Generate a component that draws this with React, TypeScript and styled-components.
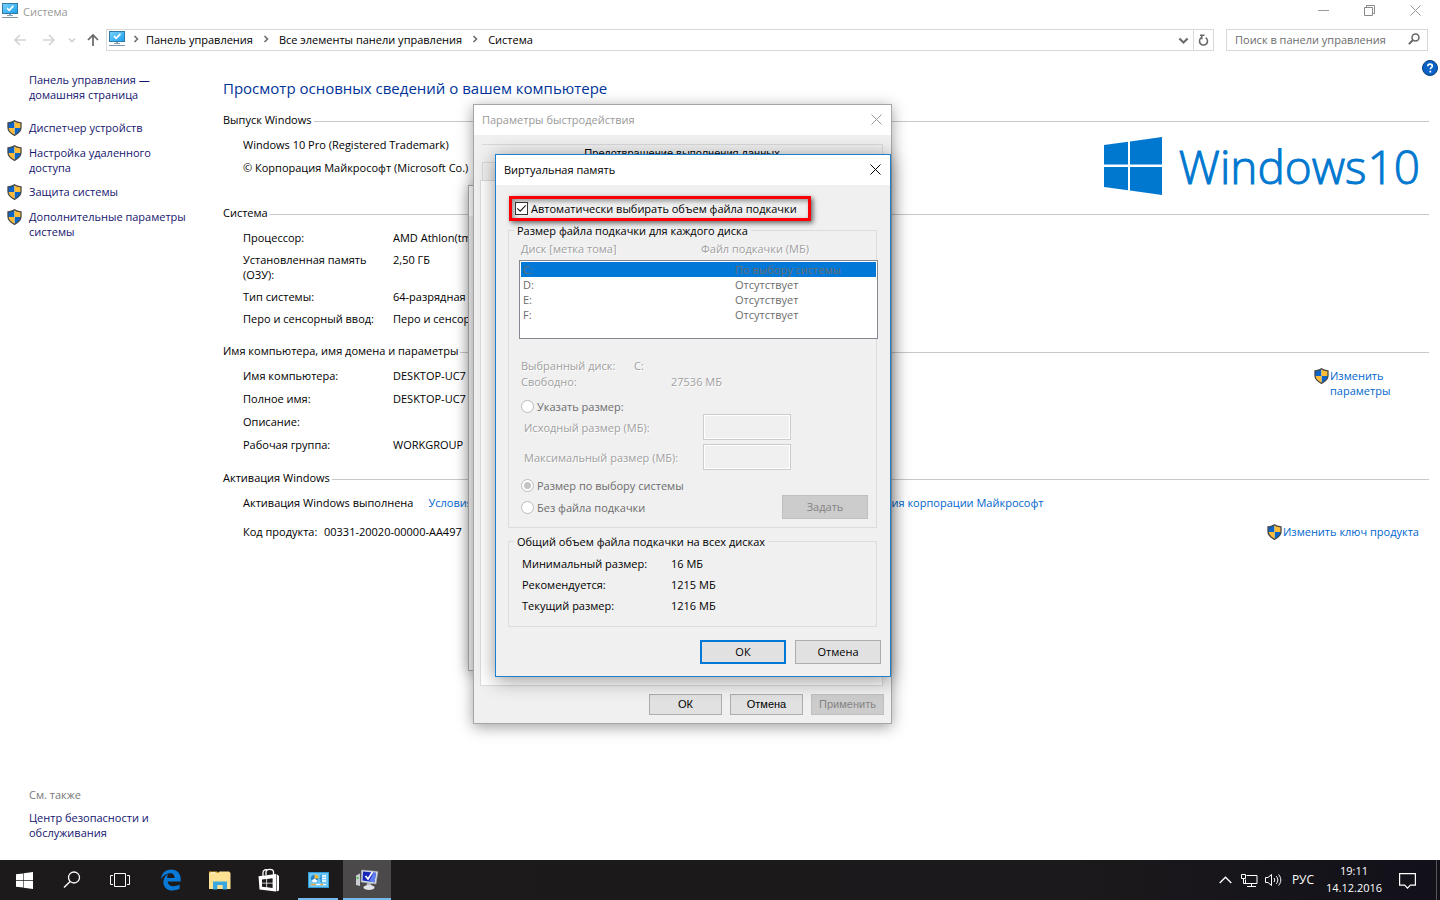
import React from 'react';
import styled, { createGlobalStyle, css } from 'styled-components';

const Global = createGlobalStyle`
  *, *::before, *::after { box-sizing: border-box; }
  body {
    margin: 0;
    background: #fff;
    color: #000;
    font: 11px/15px 'Open Sans', 'Noto Sans', sans-serif;
  }
  button, input { font: inherit; color: inherit; }
  button { padding: 0; border: 0; background: none; }
  a { color: inherit; text-decoration: none; }
  svg { display: block; flex: none; }
  h1, h2, p, ul, dl, dd, dt { margin: 0; padding: 0; font-weight: 400; }
`;

/* ---------- Desktop and main window ---------- */

const Desktop = styled.div`
  position: relative;
  display: flex;
  flex-direction: column;
  min-height: 100vh;
  overflow: hidden;
`;

const MainWindow = styled.main`
  flex: 1;
  display: flex;
  flex-direction: column;
`;

const TitleBar = styled.header`
  display: flex;
  align-items: center;
  height: 24px;
  padding: 0 2px 2px;
  gap: 5px;
  color: #999;
`;

const WindowTitle = styled.span`
  flex: 1;
`;

const CaptionButtons = styled.div`
  display: flex;
  align-self: flex-start;
`;

const CaptionButton = styled.button`
  display: grid;
  place-items: center;
  width: 46px;
  height: 21px;
`;

const NavBar = styled.nav`
  display: flex;
  align-items: stretch;
  height: 22px;
  margin-top: 5px;
  padding: 0 12px 0 6px;
`;

const NavButton = styled.button<{ $w: number }>`
  display: grid;
  place-items: center;
  width: ${(p) => p.$w}px;
`;

const AddressBar = styled.div`
  flex: 1;
  display: flex;
  align-items: center;
  margin-right: 12px;
  padding-left: 2px;
  border: 1px solid #d9d9d9;
`;

const Crumbs = styled.div`
  flex: 1;
  display: flex;
  align-items: center;
  padding-bottom: 2px;
`;

const CrumbArrow = styled.span<{ $first?: boolean }>`
  display: grid;
  place-items: center;
  width: ${(p) => (p.$first ? 21 : 26)}px;
`;

const AddressButton = styled.button<{ $divided?: boolean }>`
  display: grid;
  place-items: center;
  align-self: stretch;
  width: 20px;
  border-left: ${(p) => (p.$divided ? '1px solid #d9d9d9' : '0')};
`;

const SearchBox = styled.label`
  display: flex;
  align-items: center;
  width: 202px;
  padding: 0 7px 2px 8px;
  border: 1px solid #d9d9d9;
`;

const SearchInput = styled.input`
  flex: 1;
  min-width: 0;
  padding: 0;
  border: 0;
  outline: 0;
  background: none;
  &::placeholder { color: #6d6d6d; opacity: 1; }
`;

const Columns = styled.div`
  flex: 1;
  display: grid;
  grid-template-columns: 223px minmax(0, 1fr);
  padding-right: 11px;
`;

const Sidebar = styled.aside`
  display: flex;
  flex-direction: column;
  padding: 21px 0 20px;
`;

const SideLink = styled.a<{ $after?: number }>`
  display: flex;
  width: 192px;
  margin-bottom: ${(p) => p.$after ?? 9}px;
  padding-left: 7px;
  color: #15156e;
`;

const SideIcon = styled.span`
  flex: none;
  width: 22px;
`;

const SeeAlso = styled.p`
  margin-top: auto;
  padding: 0 0 8px 29px;
  color: #777;
`;

const Content = styled.section`
  position: relative;
  padding-top: 27px;
`;

const HelpButton = styled.button`
  position: absolute;
  top: 9px;
  right: -9px;
`;

const PageTitle = styled.h1`
  margin-bottom: 14px;
  color: #003399;
  font-size: 15px;
  line-height: 20px;
`;

const SectionBox = styled.section<{ $after?: number }>`
  margin-bottom: ${(p) => p.$after ?? 17}px;
`;

const SectionHeading = styled.h2`
  display: flex;
  align-items: center;
  gap: 2px;
  margin-bottom: 10px;
  font-size: 11px;
  line-height: 15px;
  white-space: nowrap;
  &::after {
    content: '';
    flex: 1;
    height: 1px;
    margin-top: 3px;
    background: #c8c8c8;
  }
`;

const SectionBody = styled.div`
  display: flex;
  justify-content: space-between;
  align-items: flex-start;
  padding-left: 20px;
`;

const Lines = styled.div`
  display: flex;
  flex-direction: column;
  gap: 8px;
`;

const Facts = styled.dl<{ $gap: number; $label: number }>`
  display: grid;
  grid-template-columns: ${(p) => p.$label}px max-content;
  row-gap: ${(p) => p.$gap}px;
  dt { padding-right: 2px; }
`;

const Brand = styled.div`
  display: flex;
  align-items: center;
  gap: 17px;
  height: 58px;
  padding-right: 9px;
  color: #0078d0;
`;

const BrandName = styled.span`
  display: flex;
  gap: 1px;
  font-size: 46px;
  font-weight: 300;
  line-height: 58px;
  -webkit-text-stroke: 1px currentColor;
`;

const ShieldLink = styled.a<{ $w?: number }>`
  display: flex;
  gap: 1px;
  width: ${(p) => (p.$w ? `${p.$w}px` : 'auto')};
  color: #0066cc;
`;

const ActivationRow = styled.div`
  display: flex;
  gap: 15px;
  margin-bottom: 14px;
  padding-left: 20px;
`;

const LicenseLink = styled.a`
  display: flex;
  justify-content: space-between;
  width: 615px;
  color: #0066cc;
  white-space: nowrap;
`;

const ProductRow = styled.div`
  display: flex;
  justify-content: space-between;
  padding: 0 10px 0 20px;
`;

/* ---------- Dialogs ---------- */

const dialogFrame = css`
  position: absolute;
  display: flex;
  flex-direction: column;
  background: #f0f0f0;
`;

const PropertiesDialog = styled.div`
  ${dialogFrame}
  left: 468px;
  top: 185px;
  width: 410px;
  height: 486px;
  border: 1px solid #a6a6a6;
  box-shadow: 0 2px 14px rgba(0, 0, 0, 0.35);
`;

const PerformanceDialog = styled.div`
  ${dialogFrame}
  left: 473px;
  top: 104px;
  width: 419px;
  height: 620px;
  border: 1px solid #a6a6a6;
  box-shadow: 0 3px 14px rgba(0, 0, 0, 0.38);
`;

const MemoryDialog = styled.form`
  ${dialogFrame}
  left: 495px;
  top: 154px;
  width: 396px;
  border: 1px solid #1a80d2;
  box-shadow: 0 3px 18px rgba(0, 0, 0, 0.42);
`;

const DialogTitle = styled.header<{ $inactive?: boolean }>`
  display: flex;
  flex: none;
  align-items: center;
  justify-content: space-between;
  height: 30px;
  padding: 0 9px 2px 8px;
  background: #fff;
  color: ${(p) => (p.$inactive ? '#999' : '#000')};
`;

const TabStack = styled.div`
  display: flex;
  flex-direction: column;
  margin: 9px 8px 0;
`;

const Tab = styled.button<{ $back?: boolean }>`
  height: 18px;
  border: 1px solid #d9d9d9;
  border-bottom: 0;
  border-left-width: ${(p) => (p.$back ? 0 : 1)}px;
  background: #f0f0f0;
  font-family: 'Liberation Sans', sans-serif;
  line-height: 17px;
`;

const TabPanel = styled.div`
  flex: 1;
  margin: 0 8px 8px 6px;
  border: 1px solid #dcdcdc;
  background: #fff;
`;

const ButtonRow = styled.div<{ $gap: number }>`
  display: flex;
  justify-content: flex-end;
  gap: ${(p) => p.$gap}px;
`;

const PushButton = styled.button<{ $small?: boolean; $primary?: boolean }>`
  width: ${(p) => (p.$small ? 73 : 86)}px;
  height: ${(p) => (p.$small ? 21 : 24)}px;
  padding-bottom: ${(p) => (p.$small ? 0 : 2)}px;
  border: ${(p) => (p.$primary ? '2px solid #0078d7' : '1px solid #adadad')};
  background: #e1e1e1;
  font-family: ${(p) => (p.$small ? "'Liberation Sans', sans-serif" : 'inherit')};
  line-height: 15px;
  &:disabled {
    border-color: #bfbfbf;
    background: #ccc;
    color: #838383;
  }
`;

const PerformanceButtons = styled.div`
  padding: 0 7px 8px;
`;

const MemoryBody = styled.div`
  display: flex;
  flex-direction: column;
  padding: 11px 9px 12px 12px;
`;

const Highlight = styled.label`
  display: flex;
  align-items: center;
  gap: 3px;
  align-self: flex-start;
  width: 302px;
  height: 25px;
  margin: 0 0 2px 1px;
  padding-left: 3px;
  border: 3px solid #fb0007;
  box-shadow: 2px 2px 5px rgba(0, 0, 0, 0.6), inset 2px 2px 5px rgba(0, 0, 0, 0.4);
`;

const CheckBox = styled.input`
  appearance: none;
  width: 13px;
  height: 13px;
  margin: 0;
  border: 1px solid #333;
  background: #fff;
  &:checked {
    background: #fff
      url("data:image/svg+xml,%3Csvg xmlns='http://www.w3.org/2000/svg' viewBox='0 0 11 11'%3E%3Cpath d='M1.3 5.3 4.2 8.2 9.7 2.3' fill='none' stroke='%23222' stroke-width='1.2'/%3E%3C/svg%3E");
  }
`;

const Group = styled.fieldset<{ $bottom: number }>`
  min-width: 0;
  margin: 0 4px 6px 0;
  padding: 0 0 ${(p) => p.$bottom}px 5px;
  border: 1px solid #dcdcdc;
`;

const Legend = styled.legend`
  padding: 0 3px;
`;

const ListHead = styled.div`
  display: grid;
  grid-template-columns: 180px 1fr;
  padding: 3px 0 4px 7px;
`;

const Dim = styled.span`
  color: #a0a0a0;
  text-shadow: 1px 1px 0 #fff;
`;

const DriveFrame = styled.div`
  height: 79px;
  margin: 0 -2px 19px 5px;
  padding: 1px;
  border: 1px solid #828790;
  background: #fff;
`;

const DriveTable = styled.table`
  width: 100%;
  border-spacing: 0;
  color: #6d6d6d;
  td { height: 15px; padding: 0 2px; }
  td:first-child { width: 212px; }
`;

const DriveRow = styled.tr<{ $selected?: boolean }>`
  background: ${(p) => (p.$selected ? '#0078d7' : 'transparent')};
`;

const DiskInfo = styled.div`
  display: grid;
  grid-template-columns: 113px 37px 1fr;
  row-gap: 1px;
  margin-bottom: 10px;
  padding-left: 7px;
`;

const FreeSpace = styled(Dim)`
  grid-column: 3;
`;

const RadioLabel = styled.label`
  display: flex;
  align-items: center;
  gap: 3px;
  height: 15px;
  padding-left: 7px;
  color: #6d6d6d;
`;

const Radio = styled.input`
  appearance: none;
  display: grid;
  place-items: center;
  width: 13px;
  height: 13px;
  margin: 0;
  border: 1px solid #bcbcbc;
  border-radius: 50%;
  background: #fff;
  &:checked::before {
    content: '';
    width: 7px;
    height: 7px;
    border-radius: 50%;
    background: #c4c4c4;
  }
`;

const SizeRow = styled.label`
  display: grid;
  grid-template-columns: 179px 88px;
  align-items: center;
  margin-bottom: 4px;
  padding-left: 10px;
`;

const SizeInput = styled.input`
  width: 88px;
  height: 26px;
  border: 1px solid #ccc;
  background: #f0f0f0;
  box-shadow: inset 0 0 0 1px #fff;
`;

const ModeRow = styled.div`
  display: flex;
  align-items: flex-end;
  justify-content: space-between;
  margin-top: 8px;
  padding-right: 8px;
`;

const ModeChoices = styled.div`
  display: flex;
  flex-direction: column;
  gap: 7px;
  padding-bottom: 4px;
`;

const Totals = styled.dl`
  display: grid;
  grid-template-columns: 149px 1fr;
  row-gap: 6px;
  padding: 7px 0 0 8px;
`;

const MemoryButtons = styled(ButtonRow)`
  margin-top: 7px;
`;

/* ---------- Taskbar ---------- */

const Taskbar = styled.footer`
  display: flex;
  justify-content: space-between;
  height: 40px;
  background: linear-gradient(90deg, #1d1a1b 0%, #1b191b 75%, #12111a 100%);
  color: #fff;
`;

const TaskGroup = styled.div<{ $gap?: number }>`
  display: flex;
  gap: ${(p) => p.$gap ?? 0}px;
`;

const TaskButton = styled.button<{ $state?: 'open' | 'active' }>`
  display: grid;
  place-items: center;
  position: relative;
  width: 48px;
  height: 40px;
  background: ${(p) => (p.$state === 'active' ? '#4b494a' : 'none')};
  &::after {
    content: '';
    position: absolute;
    bottom: 0;
    left: ${(p) => (p.$state === 'open' ? 4 : 0)}px;
    right: ${(p) => (p.$state === 'open' ? 4 : 0)}px;
    height: ${(p) => (p.$state ? 2 : 0)}px;
    background: #76b9ed;
  }
`;

const TrayButton = styled.button<{ $w: number }>`
  display: grid;
  place-items: center;
  width: ${(p) => p.$w}px;
  height: 40px;
  color: #fff;
`;

const Language = styled(TrayButton)`
  padding: 0 0 2px 3px;
  font-size: 12px;
`;

const Clock = styled.time`
  width: 72px;
  padding-top: 2px;
  text-align: center;
  line-height: 17px;
  white-space: pre-line;
`;

const ShowDesktop = styled.button`
  width: 4px;
  height: 40px;
  margin-left: 12px;
  border-left: 1px solid #56555a;
`;

/* ---------- Icons ---------- */

const MonitorIcon = () => (
  <svg width="16" height="16" viewBox="0 0 16 16">
    <defs>
      <linearGradient id="screen" x1="0" y1="0" x2="1" y2="1">
        <stop offset="0" stopColor="#7bd3fb" />
        <stop offset="1" stopColor="#189ff0" />
      </linearGradient>
    </defs>
    <rect x=".5" y=".5" width="15" height="10" fill="url(#screen)" stroke="#2f7ba6" />
    <path d="M5 5.2 7.2 7.4 11.4 2.9" fill="none" stroke="#fff" strokeWidth="1.7" />
    <path d="M7 11h2v1h2v1H5v-1h2z" fill="#8aa0b0" />
    <path d="M0 14h16v1H0z" fill="#7d96a8" />
  </svg>
);

const ShieldIcon = () => (
  <svg width="15" height="16" viewBox="0 0 15 16">
    <clipPath id="shield"><path d="M7.5 1 14 3v4.5c0 3.5-3 6-6.500 7.700C4 13.500 1 11 1 7.500V3z" /></clipPath>
    <g clipPath="url(#shield)">
      <path d="M0 0h7.500v8H0zM7.500 8H15v8H7.500z" fill="#0b64c8" />
      <path d="M7.500 0H15v8H7.500zM0 8h7.500v8H0z" fill="#fdbc35" />
    </g>
    <path d="M7.500.7C6 2 3.500 2.700 1 2.900v4.600c0 3.500 3 6.100 6.500 7.800 3.500-1.700 6.500-4.300 6.500-7.800V2.900C11.500 2.700 9 2 7.500.7z" fill="none" stroke="#474747" strokeWidth="1.300" />
  </svg>
);

const CloseIcon = () => (
  <svg width="11" height="11" viewBox="0 0 11 11">
    <path d="M.5.5l10 10M10.500.5l-10 10" stroke="currentColor" fill="none" />
  </svg>
);

const ArrowIcon = ({ turn, color }: { turn: number; color: string }) => (
  <svg width="14" height="14" viewBox="0 0 14 14">
    <path d="M7 13V2M2 7l5-5 5 5" fill="none" stroke={color} strokeWidth="1.700" transform={`rotate(${turn} 7 7)`} />
  </svg>
);

const Chevron = ({ turn, color = '#6e6e6e', size = 8 }: { turn: number; color?: string; size?: number }) => (
  <svg width={size} height={size} viewBox="0 0 8 8">
    <path d="M1 2.500l3 3 3-3" fill="none" stroke={color} strokeWidth="1.600" transform={`rotate(${turn} 4 4)`} />
  </svg>
);

const RefreshIcon = () => (
  <svg width="11" height="12" viewBox="0 0 11 12">
    <path d="M7.700 3.700A4 4 0 1 1 3.300 3.700" fill="none" stroke="#666" strokeWidth="1.500" />
    <path d="M2 1.200h4.500M3.800 1v4.200" fill="none" stroke="#666" strokeWidth="1.500" />
  </svg>
);

const SearchIcon = () => (
  <svg width="12" height="12" viewBox="0 0 12 12">
    <circle cx="7.500" cy="4.500" r="3.500" fill="none" stroke="#666" strokeWidth="1.500" />
    <path d="M5 7 .8 11.200" stroke="#666" strokeWidth="1.900" />
  </svg>
);

const HelpIcon = () => (
  <svg width="16" height="16" viewBox="0 0 16 16">
    <circle cx="8" cy="8" r="7.500" fill="#0a62c6" stroke="#0c3e7a" />
    <path d="M5.800 6.200C5.800 3.300 10.300 3.500 10.300 6c0 1.600-2 1.700-2 3.300" fill="none" stroke="#fff" strokeWidth="1.700" />
    <path d="M7.400 10.700h1.800v1.800H7.400z" fill="#fff" />
  </svg>
);

const WindowsFlag = ({ size }: { size: number }) => (
  <svg width={size} height={size} viewBox="0 0 58 58">
    <path d="M0 8.100 24 4.700V27.500H0zM26 4.400 58 0v27.500H26zM0 30h24v23.300L0 49.900zM26 30h32v28l-32-4.400z" fill="currentColor" />
  </svg>
);

const TaskSearchIcon = () => (
  <svg width="18" height="18" viewBox="0 0 18 18">
    <circle cx="11" cy="6.500" r="5.500" fill="none" stroke="#fff" strokeWidth="1.300" />
    <path d="M7.100 10.400 1 16.500" stroke="#fff" strokeWidth="1.400" />
  </svg>
);

const TaskViewIcon = () => (
  <svg width="20" height="16" viewBox="0 0 20 16" fill="none" stroke="#fff">
    <path d="M4.500 1.500h11v13h-11zM3 3.500H.5v9H3M17 3.500h2.500v9H17" />
  </svg>
);

const EdgeIcon = () => (
  <svg width="20" height="22" viewBox="0 0 20 22">
    <path
      d="M0 10.200C.6 4.300 4.600.6 10.200.6c6 0 9.500 4.200 9.500 9.700v2.200H6.700c.2 3.200 2.600 4.700 5.700 4.700 2.200 0 4.300-.6 6.200-1.700v4.300c-2.200 1.200-4.600 1.700-7.200 1.700-5.400 0-9-3.200-9-8.300 0-3.800 2-6.900 5.300-8.400-1 1.200-1.500 2.700-1.600 4.100h7.500c0-2.900-1.500-4.600-4.300-4.600-3.800 0-7.300 2.400-9.300 5.900z"
      fill="#0a7ad8"
    />
  </svg>
);

const FolderIcon = () => (
  <svg width="22" height="19" viewBox="0 0 22 19">
    <path d="M0 .5h8l2 2H0z" fill="#e9b02e" />
    <path d="M0 2h9l1.500-1.500H20L21.500 2v16H0z" fill="#fde293" />
    <path d="M1.500 1.200h5v1h-5z" fill="#fff" />
    <path d="M4 18.500v-8h14v8h-4.300V14H8.300v4.500z" fill="#39a8e0" />
  </svg>
);

const StoreIcon = () => (
  <svg width="22" height="24" viewBox="0 0 22 24">
    <path d="M5 8V4.500C5 2 8 0.800 10 2.200M8 7V4c0-3.600 7.500-3.600 7.500 0v4" fill="none" stroke="#fff" strokeWidth="1.300" />
    <path d="M.5 8.200 18 6v17.500L1.500 21.500zM18.600 6l2.400 2v14.500l-2.400 1z" fill="#fff" />
    <path d="M4 11.500l4.300-.5v3.700H4zM9.100 10.900l5.500-.6v4.400H9.100zM4 15.500h4.300v3.700L4 18.800zM9.100 15.500h5.500v4.400l-5.500-.6z" fill="#1c1a1b" />
  </svg>
);

const ControlPanelIcon = () => (
  <svg width="21" height="16" viewBox="0 0 21 16">
    <rect x=".5" y=".5" width="20" height="15" fill="#6cc6f5" stroke="#2e9bd6" />
    <circle cx="6.500" cy="6.500" r="3.500" fill="#1b7fc9" />
    <path d="M6.500 6.500 9.500 8.800A3.700 3.700 0 0 1 3.500 8.800z" fill="#fff" />
    <path d="M6.500 6.500V2.500a4 4 0 0 1 4 4z" fill="#fdb92c" />
    <path d="M14 4h4M14 6.500h4M14 9h4" stroke="#fff" strokeWidth="1.400" />
    <path d="M14 3H13v7h1M11.500 6.500H13" stroke="#1b7fc9" fill="none" />
    <path d="M3 12.500h15" stroke="#fff" strokeWidth="1.200" />
    <path d="M3 12.500h5M12.500 12.500H15" stroke="#f0a030" strokeWidth="1.300" />
  </svg>
);

const SystemIcon = () => (
  <svg width="24" height="22" viewBox="0 0 24 22">
    <path d="M1 6.500 5 4.500V17l-4-1z" fill="#c9ccd2" />
    <path d="M1.500 8h2v2h-2z" fill="#4fc04a" />
    <path d="M6.500 1 23 2.500 21 15 6 13z" fill="#d8dce4" stroke="#9aa0ab" strokeWidth=".6" />
    <path d="M8 2.600 21 3.800 19.500 13.200 7.500 11.600z" fill="#1627b8" />
    <path d="M14 12.800l4.500-9 2.500.2-1.500 9.200z" fill="#5f7df0" />
    <path d="M10.500 7l2.500 3L17.500 3" fill="none" stroke="#fff" strokeWidth="1.700" />
    <path d="M12 14h4l.5 3h-5z" fill="#b4b8c0" />
    <ellipse cx="14" cy="18.500" rx="5.500" ry="2.500" fill="#e1e3e8" />
  </svg>
);

const NetworkIcon = () => (
  <svg width="17" height="15" viewBox="0 0 17 15" fill="none" stroke="#fff">
    <path d="M5.500 2.500h10.500v8H4.500V6.500M10.500 10.500v3M6 13.500h9M.5 1.500h4v4h-4zM2.500 5.500v5H5" />
  </svg>
);

const SoundIcon = () => (
  <svg width="17" height="14" viewBox="0 0 17 14" fill="none" stroke="#fff">
    <path d="M.5 4.500h2.500l3.500-3v11L3 9.500H.5zM9 5c.9 1.300.9 2.700 0 4M11.300 3.200c2 2.400 2 5.200 0 7.600M13.600 1.500c2.900 3.500 2.900 7.500 0 11" />
  </svg>
);

const ActionCenterIcon = () => (
  <svg width="17" height="17" viewBox="0 0 17 17" fill="none" stroke="#fff" strokeWidth="1.200">
    <path d="M.6 1.600h15.800v11.500h-5l-2.900 3-2.900-3h-5z" />
  </svg>
);

/* ---------- Data ---------- */

const sideTasks = [
  'Диспетчер устройств',
  'Настройка удаленного доступа',
  'Защита системы',
  'Дополнительные параметры системы',
];

const systemFacts = [
  ['Процессор:', 'AMD Athlon(tm)'],
  ['Установленная память (ОЗУ):', '2,50 ГБ'],
  ['Тип системы:', '64-разрядная ОС'],
  ['Перо и сенсорный ввод:', 'Перо и сенсорный ввод'],
];

const nameFacts = [
  ['Имя компьютера:', 'DESKTOP-UC7'],
  ['Полное имя:', 'DESKTOP-UC7'],
  ['Описание:', ''],
  ['Рабочая группа:', 'WORKGROUP'],
];

const drives = [
  ['C:', 'По выбору системы'],
  ['D:', 'Отсутствует'],
  ['E:', 'Отсутствует'],
  ['F:', 'Отсутствует'],
];

const totals = [
  ['Минимальный размер:', '16 МБ'],
  ['Рекомендуется:', '1215 МБ'],
  ['Текущий размер:', '1216 МБ'],
];

const FactRows = ({ rows }: { rows: string[][] }) => (
  <>
    {rows.map(([label, value]) => (
      <React.Fragment key={label}>
        <dt>{label}</dt>
        <dd>{value}</dd>
      </React.Fragment>
    ))}
  </>
);

const SystemWindow = () => (
  <MainWindow>
    <TitleBar>
      <MonitorIcon />
      <WindowTitle>Система</WindowTitle>
      <CaptionButtons>
        <CaptionButton aria-label="Свернуть">
          <svg width="11" height="11"><path d="M0 5.500h11" stroke="#999" /></svg>
        </CaptionButton>
        <CaptionButton aria-label="Свернуть в окно">
          <svg width="11" height="11" fill="none" stroke="#888"><path d="M.5 2.500h8v8h-8zM2.500 2.500v-2h8v8h-2" /></svg>
        </CaptionButton>
        <CaptionButton aria-label="Закрыть"><CloseIcon /></CaptionButton>
      </CaptionButtons>
    </TitleBar>

    <NavBar>
      <NavButton $w={27} aria-label="Назад"><ArrowIcon turn={-90} color="#d4d4d4" /></NavButton>
      <NavButton $w={31} aria-label="Вперед"><ArrowIcon turn={90} color="#d4d4d4" /></NavButton>
      <NavButton $w={16} aria-label="Последние"><Chevron turn={0} color="#d0d0d0" /></NavButton>
      <NavButton $w={26} aria-label="Вверх"><ArrowIcon turn={0} color="#666" /></NavButton>
      <AddressBar>
        <Crumbs>
          <MonitorIcon />
          <CrumbArrow $first><Chevron turn={-90} /></CrumbArrow>
          <a href="#panel">Панель управления</a>
          <CrumbArrow><Chevron turn={-90} /></CrumbArrow>
          <a href="#all">Все элементы панели управления</a>
          <CrumbArrow><Chevron turn={-90} /></CrumbArrow>
          <a href="#system">Система</a>
        </Crumbs>
        <AddressButton aria-label="Предыдущие расположения"><Chevron turn={0} size={11} /></AddressButton>
        <AddressButton $divided aria-label="Обновить"><RefreshIcon /></AddressButton>
      </AddressBar>
      <SearchBox>
        <SearchInput type="text" aria-label="Поиск" placeholder="Поиск в панели управления" />
        <SearchIcon />
      </SearchBox>
    </NavBar>

    <Columns>
      <Sidebar>
        <SideLink href="#home" $after={18}>
          <SideIcon />
          <span>Панель управления — домашняя страница</span>
        </SideLink>
        {sideTasks.map((t) => (
          <SideLink href="#task" key={t}>
            <SideIcon><ShieldIcon /></SideIcon>
            <span>{t}</span>
          </SideLink>
        ))}
        <SeeAlso>См. также</SeeAlso>
        <SideLink href="#security" $after={0}>
          <SideIcon />
          <span>Центр безопасности и обслуживания</span>
        </SideLink>
      </Sidebar>

      <Content>
        <HelpButton aria-label="Справка"><HelpIcon /></HelpButton>
        <PageTitle>Просмотр основных сведений о вашем компьютере</PageTitle>

        <SectionBox $after={10}>
          <SectionHeading>Выпуск Windows</SectionHeading>
          <SectionBody>
            <Lines>
              <p>Windows 10 Pro (Registered Trademark)</p>
              <p>© Корпорация Майкрософт (Microsoft Co.)</p>
            </Lines>
            <Brand>
              <WindowsFlag size={58} />
              <BrandName><span>Windows</span><span>10</span></BrandName>
            </Brand>
          </SectionBody>
        </SectionBox>

        <SectionBox>
          <SectionHeading>Система</SectionHeading>
          <SectionBody>
            <Facts $gap={7} $label={150}><FactRows rows={systemFacts} /></Facts>
          </SectionBody>
        </SectionBox>

        <SectionBox $after={18}>
          <SectionHeading>Имя компьютера, имя домена и параметры</SectionHeading>
          <SectionBody>
            <Facts $gap={8} $label={150}><FactRows rows={nameFacts} /></Facts>
            <ShieldLink href="#rename" $w={115}>
              <ShieldIcon />
              <span>Изменить параметры</span>
            </ShieldLink>
          </SectionBody>
        </SectionBox>

        <SectionBox>
          <SectionHeading>Активация Windows</SectionHeading>
          <ActivationRow>
            <span>Активация Windows выполнена</span>
            <LicenseLink href="#license">
              <span>Условия лицензии</span>
              <span>соглашения корпорации Майкрософт</span>
            </LicenseLink>
          </ActivationRow>
          <ProductRow>
            <Facts $gap={0} $label={81}><FactRows rows={[['Код продукта:', '00331-20020-00000-AA497']]} /></Facts>
            <ShieldLink href="#key">
              <ShieldIcon />
              <span>Изменить ключ продукта</span>
            </ShieldLink>
          </ProductRow>
        </SectionBox>
      </Content>
    </Columns>
  </MainWindow>
);

const Performance = () => (
  <PerformanceDialog role="dialog" aria-label="Параметры быстродействия">
    <DialogTitle $inactive>
      <span>Параметры быстродействия</span>
      <button aria-label="Закрыть"><CloseIcon /></button>
    </DialogTitle>
    <TabStack>
      <Tab $back>Предотвращение выполнения данных</Tab>
      <Tab aria-label="Визуальные эффекты" />
    </TabStack>
    <TabPanel />
    <PerformanceButtons>
      <ButtonRow $gap={8}>
        <PushButton $small>ОК</PushButton>
        <PushButton $small>Отмена</PushButton>
        <PushButton $small disabled>Применить</PushButton>
      </ButtonRow>
    </PerformanceButtons>
  </PerformanceDialog>
);

const VirtualMemory = () => (
  <MemoryDialog role="dialog" aria-label="Виртуальная память" onSubmit={(e) => e.preventDefault()}>
    <DialogTitle>
      <span>Виртуальная память</span>
      <button type="button" aria-label="Закрыть"><CloseIcon /></button>
    </DialogTitle>
    <MemoryBody>
      <Highlight>
        <CheckBox type="checkbox" defaultChecked />
        <span>Автоматически выбирать объем файла подкачки</span>
      </Highlight>

      <Group $bottom={8}>
        <Legend>Размер файла подкачки для каждого диска</Legend>
        <ListHead>
          <Dim>Диск [метка тома]</Dim>
          <Dim>Файл подкачки (МБ)</Dim>
        </ListHead>
        <DriveFrame>
          <DriveTable aria-label="Диски">
            <tbody>
              {drives.map(([name, mode], i) => (
                <DriveRow key={name} $selected={i === 0}>
                  <td>{name}</td>
                  <td>{mode}</td>
                </DriveRow>
              ))}
            </tbody>
          </DriveTable>
        </DriveFrame>
        <DiskInfo>
          <Dim>Выбранный диск:</Dim>
          <Dim>C:</Dim>
          <span />
          <Dim>Свободно:</Dim>
          <FreeSpace>27536 МБ</FreeSpace>
        </DiskInfo>
        <RadioLabel><Radio type="radio" name="mode" disabled />Указать размер:</RadioLabel>
        <SizeRow>
          <Dim>Исходный размер (МБ):</Dim>
          <SizeInput type="text" disabled />
        </SizeRow>
        <SizeRow>
          <Dim>Максимальный размер (МБ):</Dim>
          <SizeInput type="text" disabled />
        </SizeRow>
        <ModeRow>
          <ModeChoices>
            <RadioLabel><Radio type="radio" name="mode" disabled defaultChecked />Размер по выбору системы</RadioLabel>
            <RadioLabel><Radio type="radio" name="mode" disabled />Без файла подкачки</RadioLabel>
          </ModeChoices>
          <PushButton type="button" disabled>Задать</PushButton>
        </ModeRow>
      </Group>

      <Group $bottom={13}>
        <Legend>Общий объем файла подкачки на всех дисках</Legend>
        <Totals><FactRows rows={totals} /></Totals>
      </Group>

      <MemoryButtons $gap={9}>
        <PushButton $primary>ОК</PushButton>
        <PushButton type="button">Отмена</PushButton>
      </MemoryButtons>
    </MemoryBody>
  </MemoryDialog>
);

export default function App() {
  return (
    <Desktop>
      <Global />
      <SystemWindow />
      <PropertiesDialog><DialogTitle $inactive /></PropertiesDialog>
      <Performance />
      <VirtualMemory />
      <Taskbar>
        <TaskGroup $gap={3}>
          <TaskGroup>
            <TaskButton aria-label="Пуск"><WindowsFlag size={17} /></TaskButton>
            <TaskButton aria-label="Поиск в Windows"><TaskSearchIcon /></TaskButton>
            <TaskButton aria-label="Представление задач"><TaskViewIcon /></TaskButton>
          </TaskGroup>
          <TaskGroup $gap={1}>
            <TaskButton aria-label="Edge"><EdgeIcon /></TaskButton>
            <TaskButton aria-label="Проводник"><FolderIcon /></TaskButton>
            <TaskButton aria-label="Магазин"><StoreIcon /></TaskButton>
            <TaskButton aria-label="Панель управления" $state="open"><ControlPanelIcon /></TaskButton>
            <TaskButton aria-label="Свойства системы" $state="active"><SystemIcon /></TaskButton>
          </TaskGroup>
        </TaskGroup>
        <TaskGroup>
          <TrayButton $w={24} aria-label="Скрытые значки">
            <svg width="13" height="8" viewBox="0 0 13 8"><path d="M.7 7 6.500 1.200 12.300 7" fill="none" stroke="#fff" strokeWidth="1.300" /></svg>
          </TrayButton>
          <TrayButton $w={24} aria-label="Сеть"><NetworkIcon /></TrayButton>
          <TrayButton $w={24} aria-label="Громкость"><SoundIcon /></TrayButton>
          <Language $w={33}>РУС</Language>
          <Clock>{'19:11\n14.12.2016'}</Clock>
          <TrayButton $w={34} aria-label="Центр уведомлений"><ActionCenterIcon /></TrayButton>
          <ShowDesktop aria-label="Показать рабочий стол" />
        </TaskGroup>
      </Taskbar>
    </Desktop>
  );
}
